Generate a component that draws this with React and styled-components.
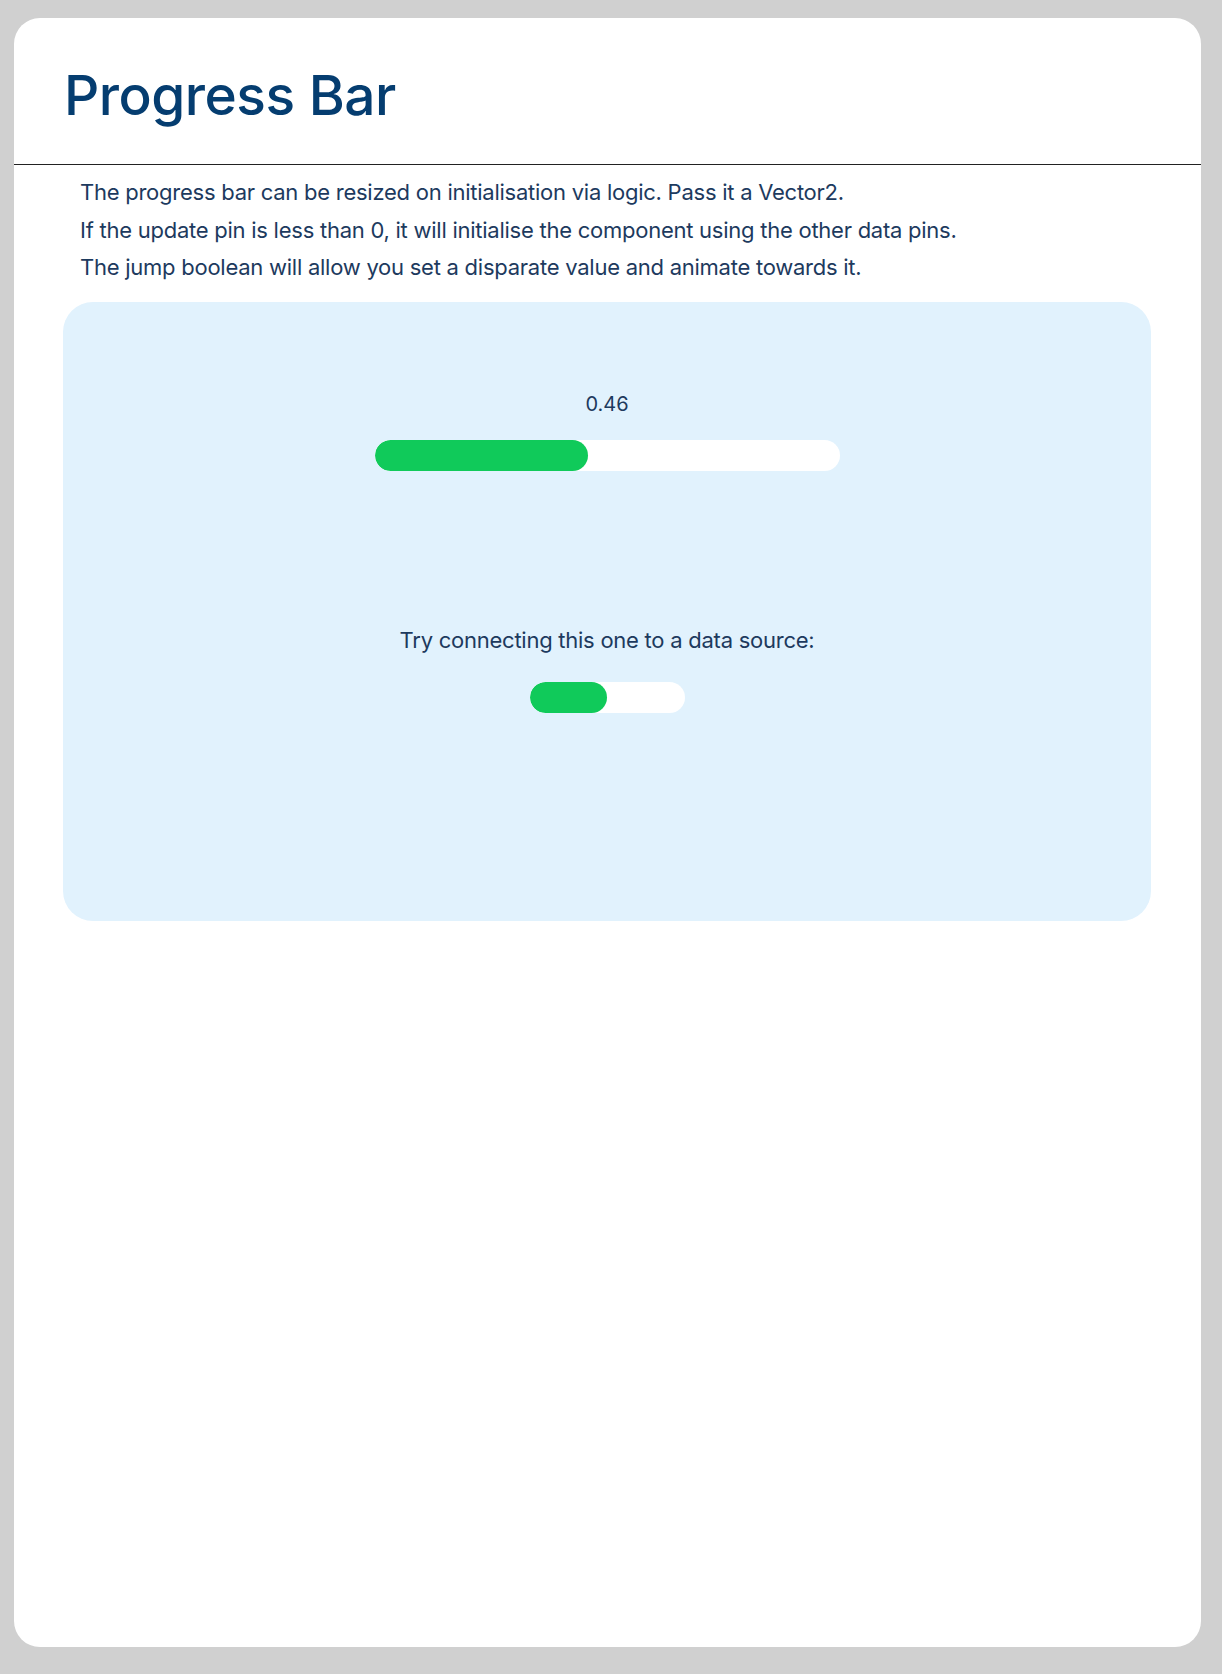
import React from "react";
import styled, { createGlobalStyle } from "styled-components";

const GlobalStyle = createGlobalStyle`
  html, body {
    margin: 0;
    padding: 0;
    background-color: #d0d0d0;
  }

  body {
    font-family: Inter, "Noto Sans", sans-serif;
  }
`;

const StyledPage = styled.div`
  display: flex;
  padding: 18px 21px 27px 14px;
`;

const StyledCard = styled.div`
  display: flex;
  flex-direction: column;
  width: 100%;
  height: 1629px;
  background-color: #ffffff;
  border-radius: 26px;
  overflow: hidden;
`;

const StyledHeader = styled.div`
  display: flex;
  align-items: center;
  height: 147px;
  padding-left: 50px;
  border-bottom: 1px solid #222222;
  box-sizing: border-box;
`;

const StyledTitle = styled.h1`
  margin: 0;
  padding-top: 8px;
  font-size: 55px;
  font-weight: 500;
  letter-spacing: -0.5px;
  color: #053d70;
`;

const StyledIntro = styled.div`
  display: flex;
  flex-direction: column;
  padding: 9px 0 15px 66px;
`;

const StyledLine = styled.p`
  margin: 0;
  font-size: 22px;
  line-height: 37.5px;
  letter-spacing: -0.25px;
  color: #1d3a5e;
`;

const StyledDemoBox = styled.div`
  display: flex;
  flex-direction: column;
  align-items: center;
  height: 619px;
  margin: 0 50px 0 49px;
  padding-top: 90px;
  box-sizing: border-box;
  background-color: #e1f2fd;
  border-radius: 30px;
`;

const StyledLabel = styled.div`
  font-size: ${(props) => props.$size || 20}px;
  line-height: 24px;
  letter-spacing: ${(props) => (props.$size ? -0.25 : 0)}px;
  color: #1d3a5e;
  margin-top: ${(props) => props.$gap || 0}px;
`;

const StyledTrack = styled.div`
  display: flex;
  width: ${(props) => props.$width}px;
  height: 31px;
  margin-top: ${(props) => props.$gap}px;
  background-color: #ffffff;
  border-radius: 16px;
  overflow: hidden;
`;

const StyledFill = styled.div`
  height: 100%;
  background-color: #10ca5a;
  border-radius: 16px;
`;

function ProgressBar({ value, width, gap }) {
  return (
    <StyledTrack $width={width} $gap={gap}>
      <StyledFill style={{ width: `${value * 100}%` }} />
    </StyledTrack>
  );
}

function App() {
  return (
    <>
      <GlobalStyle />
      <StyledPage>
        <StyledCard>
          <StyledHeader>
            <StyledTitle>Progress Bar</StyledTitle>
          </StyledHeader>
          <StyledIntro>
            <StyledLine>
              The progress bar can be resized on initialisation via logic. Pass
              it a Vector2.
            </StyledLine>
            <StyledLine>
              If the update pin is less than 0, it will initialise the
              component using the other data pins.
            </StyledLine>
            <StyledLine>
              The jump boolean will allow you set a disparate value and animate
              towards it.
            </StyledLine>
          </StyledIntro>
          <StyledDemoBox>
            <StyledLabel>0.46</StyledLabel>
            <ProgressBar value={0.46} width={465} gap={24} />
            <StyledLabel $gap={157} $size={22}>
              Try connecting this one to a data source:
            </StyledLabel>
            <ProgressBar value={0.5} width={155} gap={30} />
          </StyledDemoBox>
        </StyledCard>
      </StyledPage>
    </>
  );
}

export default App;
